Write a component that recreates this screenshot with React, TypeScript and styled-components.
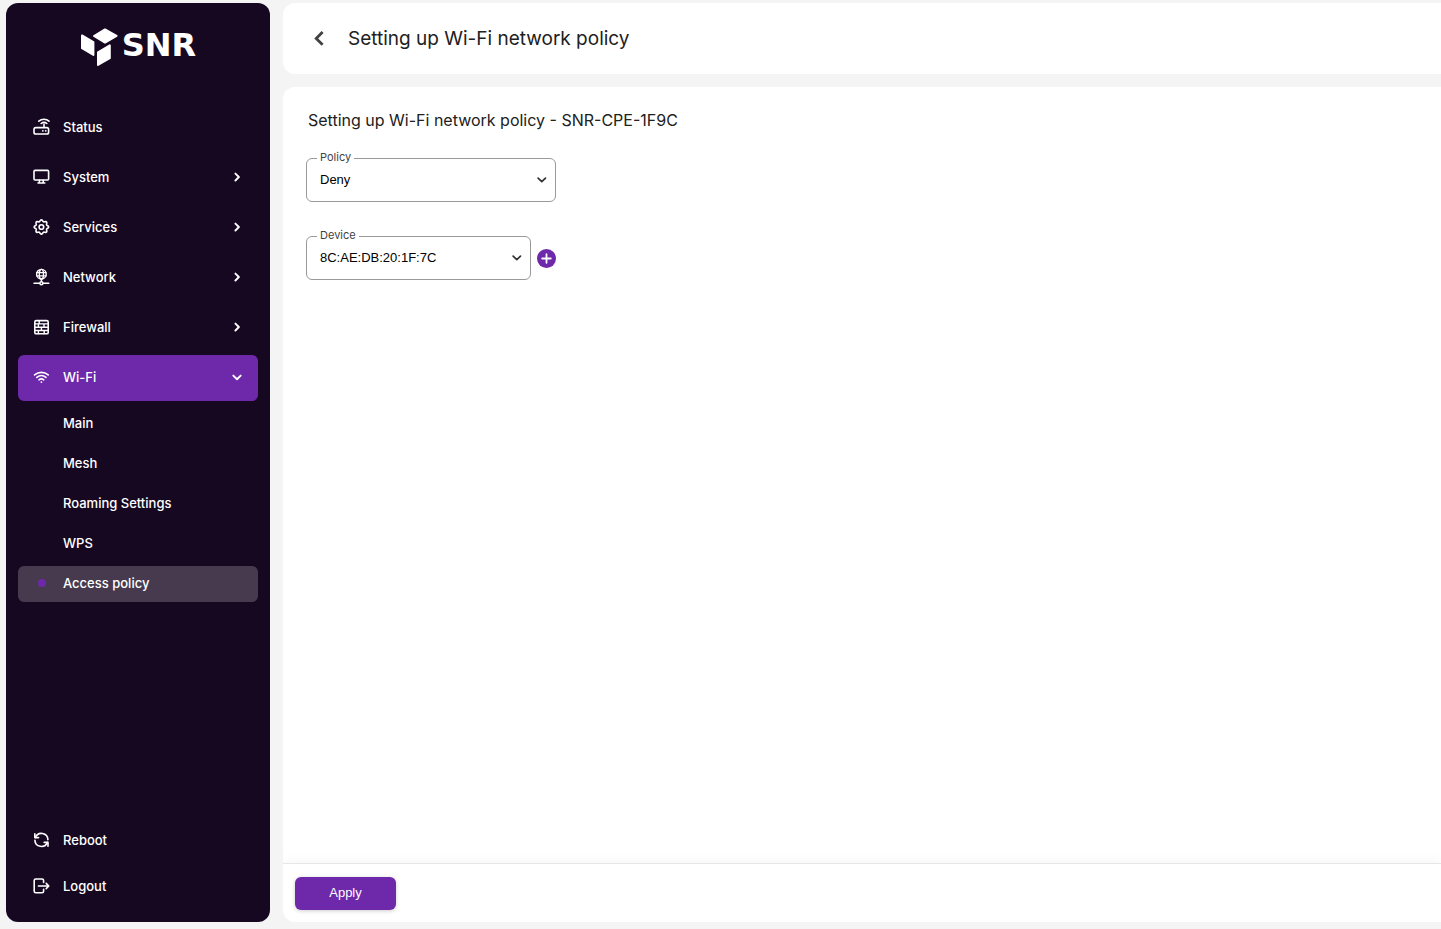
import React from "react";
import styled, { createGlobalStyle } from "styled-components";

const purple = "#6e28aa";

const GlobalStyle = createGlobalStyle`
  *, *::before, *::after { box-sizing: border-box; }
  body {
    margin: 0;
    background: #f4f4f4;
    color: #212121;
    font-family: Inter, "Liberation Sans", sans-serif;
  }
`;

const Shell = styled.div`
  display: flex;
  gap: 13px;
  min-height: 100vh;
  padding: 3px 0 7px 6px;
`;

const Sidebar = styled.aside`
  display: flex;
  flex-direction: column;
  flex: 0 0 264px;
  padding: 23px 12px 12px;
  border-radius: 12px;
  background: #170822;
  color: #fff;
`;

const Logo = styled.a`
  display: flex;
  align-items: center;
  justify-content: center;
  gap: 4px;
  height: 40px;
  margin-bottom: 39px;
  color: #fff;
  font-family: "DejaVu Sans", Verdana, sans-serif;
  font-size: 32px;
  line-height: 38px;
  font-weight: 700;
  text-decoration: none;
`;

const LogoText = styled.span`
  padding-bottom: 2px;
`;

const NavList = styled.ul<{ $gap?: number }>`
  display: flex;
  flex-direction: column;
  gap: ${(p) => p.$gap ?? 0}px;
  margin: 0;
  padding: 0;
  list-style: none;
`;

const SubList = styled(NavList)`
  padding-top: 5px;
`;

const NavButton = styled.button<{ $active?: boolean }>`
  display: flex;
  align-items: center;
  gap: 13px;
  width: 100%;
  height: 46px;
  padding: 0 12px 2px 14px;
  border: 0;
  border-radius: 6px;
  background: ${(p) => (p.$active ? purple : "transparent")};
  color: #fff;
  font: 500 13px/18px Inter, sans-serif;
  text-align: left;
  cursor: pointer;
`;

const NavText = styled.span`
  flex: 1;
`;

const SubLink = styled.a<{ $active?: boolean }>`
  display: flex;
  align-items: center;
  gap: 17px;
  height: 36px;
  padding: 0 0 2px 20px;
  border-radius: 6px;
  background: ${(p) => (p.$active ? "#473a4e" : "transparent")};
  color: #fff;
  font-size: 13px;
  line-height: 18px;
  font-weight: 500;
  text-decoration: none;

  &::before {
    content: "";
    width: 8px;
    height: 8px;
    border-radius: 50%;
    background: ${(p) => (p.$active ? purple : "transparent")};
  }
`;

const Spacer = styled.div`
  flex: 1;
`;

const Main = styled.main`
  display: flex;
  flex: 1;
  flex-direction: column;
  gap: 13px;
  min-width: 0;
`;

const Header = styled.header`
  display: flex;
  align-items: center;
  gap: 17px;
  height: 71px;
  padding-left: 24px;
  border-radius: 12px 0 0 12px;
  background: #fff;
`;

const BackButton = styled.button`
  display: flex;
  padding: 0;
  border: 0;
  background: none;
  color: #424242;
  cursor: pointer;
`;

const Title = styled.h1`
  margin: 0;
  font-size: 19px;
  line-height: 24px;
  font-weight: 400;
`;

const Card = styled.form`
  display: flex;
  flex: 1;
  flex-direction: column;
  overflow: hidden;
  border-radius: 12px 0 0 12px;
  background: #fff;
`;

const CardBody = styled.div`
  flex: 1;
  padding: 23px;
`;

const Subtitle = styled.h2`
  margin: 0 2px 28px;
  font-size: 16px;
  line-height: 20px;
  font-weight: 400;
`;

const FieldRow = styled.div`
  display: flex;
  align-items: center;
  gap: 6px;
  margin-bottom: 34px;
`;

const Field = styled.div<{ $width: number }>`
  position: relative;
  display: flex;
  width: ${(p) => p.$width}px;
`;

const FieldLabel = styled.label`
  position: absolute;
  top: -8px;
  left: 11px;
  padding: 0 3px;
  background: #fff;
  color: #424242;
  font-size: 11px;
  line-height: 14px;
`;

const Select = styled.select`
  width: 100%;
  height: 44px;
  padding: 0 32px 0 13px;
  border: 1px solid #999;
  border-radius: 6px;
  background: #fff;
  color: #000;
  font: 13px/18px "Liberation Sans", Arial, sans-serif;
  appearance: none;
`;

const SelectArrow = styled.span`
  position: absolute;
  top: 14px;
  right: 6px;
  display: flex;
  color: #333;
  pointer-events: none;
`;

const AddButton = styled.button`
  display: flex;
  align-items: center;
  justify-content: center;
  width: 19px;
  height: 19px;
  padding: 0;
  border: 0;
  border-radius: 50%;
  background: ${purple};
  color: #fff;
  cursor: pointer;
`;

const CardFooter = styled.footer`
  padding: 13px 12px 12px;
  border-top: 1px solid #e6e6e6;
  box-shadow: 0 -2px 12px rgba(0, 0, 0, 0.04);
`;

const ApplyButton = styled.button`
  width: 101px;
  height: 33px;
  padding: 0 0 2px;
  border: 0;
  border-radius: 6px;
  background: ${purple};
  box-shadow: 0 1px 4px rgba(0, 0, 0, 0.2);
  color: #fff;
  font: 13px/18px "Liberation Sans", Arial, sans-serif;
  cursor: pointer;
`;

const Stroked = styled.svg`
  flex: none;
  fill: none;
  stroke: currentColor;
  stroke-linecap: round;
  stroke-linejoin: round;
`;

function NavIcon({ children }: { children: React.ReactNode }) {
  return (
    <Stroked width="18" height="18" viewBox="0 0 18 18" strokeWidth="1.6" aria-hidden="true">
      {children}
    </Stroked>
  );
}

function Chevron({ dir }: { dir: "right" | "down" }) {
  return (
    <Stroked width="18" height="18" viewBox="0 0 18 18" strokeWidth="1.9" aria-hidden="true">
      <path d={dir === "right" ? "M7.4 5.6 10.9 9 7.4 12.5" : "M5.3 7.6 9 11.2l3.7-3.6"} />
    </Stroked>
  );
}

// Cog outline with eight soft teeth.
const gearPath =
  Array.from({ length: 96 }, (_, i) => {
    const a = (i / 96) * Math.PI * 2;
    const r = 6.4 + 0.8 * Math.cos(8 * a);
    return `${i ? "L" : "M"}${(9.4 + r * Math.cos(a)).toFixed(2)} ${(9 + r * Math.sin(a)).toFixed(2)}`;
  }).join("") + "Z";

const icons = {
  status: (
    <NavIcon>
      <rect x="2" y="9.6" width="14.6" height="6.4" rx="1.8" />
      <path d="M12 9.4V6.2M6.8 3.2c3-2.7 7.4-2.7 10.2 0M9.2 5.5c1.7-1.4 4-1.4 5.6 0" />
      <path d="M10.8 12.8h.1M13.7 12.8h.1" strokeWidth="1.7" />
    </NavIcon>
  ),
  system: (
    <NavIcon>
      <rect x="2" y="2.4" width="14.6" height="9.6" rx="1" />
      <path d="M7.4 12.2v2.6M11.2 12.2v2.6M6 15h6.8" />
    </NavIcon>
  ),
  services: (
    <NavIcon>
      <path d={gearPath} />
      <circle cx="9.4" cy="9" r="2.3" />
    </NavIcon>
  ),
  network: (
    <NavIcon>
      <g strokeWidth="1.4">
        <circle cx="9.4" cy="6.2" r="4.8" />
        <ellipse cx="9.4" cy="6.2" rx="2.1" ry="4.8" />
        <path d="M4.8 4.6h9.2M4.8 7.9h9.2" />
      </g>
      <path d="M9.4 11.2v2M2 15.2h5.4M11.4 15.2h5.4" strokeWidth="1.5" />
      <circle cx="9.4" cy="15.2" r="1.5" strokeWidth="1.5" />
    </NavIcon>
  ),
  firewall: (
    <NavIcon>
      <rect x="2.8" y="2.6" width="13.4" height="13.2" rx="1.4" />
      <path
        d="M3 5.9h13M3 9.2h13M3 12.5h13M7.2 2.8v3.1M12 5.9v3.3M6.4 5.9v3.3M9.4 9.2v3.3M6.4 12.5v3.1M12.2 12.5v3.1"
        strokeWidth="1.4"
      />
    </NavIcon>
  ),
  wifi: (
    <NavIcon>
      <path
        d="M2.6 6.9c4-3.4 9.6-3.4 13.6 0M4.8 9.4c2.8-2.3 6.4-2.3 9.2 0M7 11.8c1.5-1.2 3.3-1.2 4.8 0"
        strokeWidth="1.6"
      />
      <path d="M9.4 14.1h.01" strokeWidth="1.8" />
    </NavIcon>
  ),
  reboot: (
    <NavIcon>
      <path d="M3.4 6.4A6.5 6.5 0 0 1 15.9 8.6M15.4 11.4A6.5 6.5 0 0 1 2.9 9.2" />
      <path d="M2.8 2.8v3.8h3.8M16 15.2v-3.8h-3.8" />
    </NavIcon>
  ),
  logout: (
    <NavIcon>
      <path d="M11.6 5.4V3.6a1.6 1.6 0 0 0-1.6-1.6H3.8A1.6 1.6 0 0 0 2.2 3.6v10.6a1.6 1.6 0 0 0 1.6 1.6H10a1.6 1.6 0 0 0 1.6-1.6v-1.8" />
      <path d="M6.4 9h10.2M14.2 6.4 16.8 9l-2.6 2.6" />
    </NavIcon>
  ),
};

type IconName = keyof typeof icons;

const menu: { label: string; icon: IconName; arrow?: "right" | "down" }[] = [
  { label: "Status", icon: "status" },
  { label: "System", icon: "system", arrow: "right" },
  { label: "Services", icon: "services", arrow: "right" },
  { label: "Network", icon: "network", arrow: "right" },
  { label: "Firewall", icon: "firewall", arrow: "right" },
  { label: "Wi-Fi", icon: "wifi", arrow: "down" },
];

const wifiPages = ["Main", "Mesh", "Roaming Settings", "WPS", "Access policy"];

function SelectField(props: { id: string; label: string; value: string; width: number }) {
  return (
    <Field $width={props.width}>
      <Select id={props.id} defaultValue={props.value}>
        <option>{props.value}</option>
      </Select>
      <FieldLabel htmlFor={props.id}>{props.label}</FieldLabel>
      <SelectArrow>
        <Stroked width="16" height="16" viewBox="0 0 16 16" strokeWidth="1.7" aria-hidden="true">
          <path d="M4.1 6.2 7.8 9.7l3.7-3.5" />
        </Stroked>
      </SelectArrow>
    </Field>
  );
}

export default function App() {
  return (
    <>
      <GlobalStyle />
      <Shell>
        <Sidebar>
          <Logo href="#">
            <svg width="38" height="40" viewBox="0 0 38 40" fill="#fff" stroke="#fff" strokeWidth="2" strokeLinejoin="round" aria-hidden="true">
              <path d="M2 9.4 13.4 16v13L2 22.2Z" />
              <path d="M25 3.4 36.6 9.8 25 16.6 14 10Z" />
              <path d="M18 26.4 29.8 19.4V32.2L18 39Z" />
            </svg>
            <LogoText>SNR</LogoText>
          </Logo>
          <nav>
            <NavList $gap={4}>
              {menu.map((item) => (
                <li key={item.label}>
                  <NavButton type="button" $active={item.arrow === "down"}>
                    {icons[item.icon]}
                    <NavText>{item.label}</NavText>
                    {item.arrow && <Chevron dir={item.arrow} />}
                  </NavButton>
                  {item.arrow === "down" && (
                    <SubList $gap={4}>
                      {wifiPages.map((page) => (
                        <li key={page}>
                          <SubLink href="#" $active={page === "Access policy"}>
                            {page}
                          </SubLink>
                        </li>
                      ))}
                    </SubList>
                  )}
                </li>
              ))}
            </NavList>
          </nav>
          <Spacer />
          <NavList>
            <li>
              <NavButton type="button">
                {icons.reboot}
                <NavText>Reboot</NavText>
              </NavButton>
            </li>
            <li>
              <NavButton type="button">
                {icons.logout}
                <NavText>Logout</NavText>
              </NavButton>
            </li>
          </NavList>
        </Sidebar>
        <Main>
          <Header>
            <BackButton type="button" aria-label="Back">
              <Stroked width="24" height="24" viewBox="0 0 24 24" strokeWidth="2.8" aria-hidden="true">
                <path d="M15.6 5 9.2 11.4l6.4 6.4" strokeLinecap="butt" strokeLinejoin="miter" />
              </Stroked>
            </BackButton>
            <Title>Setting up Wi-Fi network policy</Title>
          </Header>
          <Card onSubmit={(e) => e.preventDefault()}>
            <CardBody>
              <Subtitle>Setting up Wi-Fi network policy - SNR-CPE-1F9C</Subtitle>
              <FieldRow>
                <SelectField id="policy" label="Policy" value="Deny" width={250} />
              </FieldRow>
              <FieldRow>
                <SelectField id="device" label="Device" value="8C:AE:DB:20:1F:7C" width={225} />
                <AddButton type="button" aria-label="Add device">
                  <Stroked width="13" height="13" viewBox="0 0 13 13" strokeWidth="1.8" aria-hidden="true">
                    <path d="M6.5 2.2v8.6M2.2 6.5h8.6" />
                  </Stroked>
                </AddButton>
              </FieldRow>
            </CardBody>
            <CardFooter>
              <ApplyButton type="submit">Apply</ApplyButton>
            </CardFooter>
          </Card>
        </Main>
      </Shell>
    </>
  );
}
